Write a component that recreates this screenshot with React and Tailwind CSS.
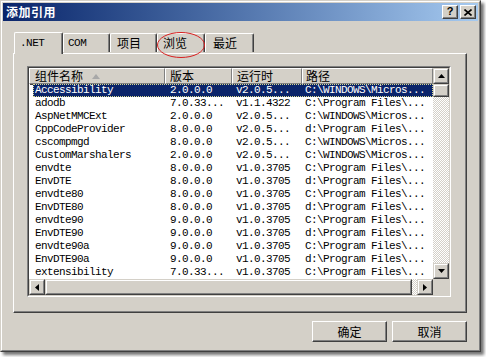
import React from "react";

const rows = [
  ["Accessibility", "2.0.0.0", "v2.0.5...", "C:\\WINDOWS\\Micros..."],
  ["adodb", "7.0.33...", "v1.1.4322", "C:\\Program Files\\..."],
  ["AspNetMMCExt", "2.0.0.0", "v2.0.5...", "C:\\WINDOWS\\Micros..."],
  ["CppCodeProvider", "8.0.0.0", "v2.0.5...", "d:\\Program Files\\..."],
  ["cscompmgd", "8.0.0.0", "v2.0.5...", "C:\\WINDOWS\\Micros..."],
  ["CustomMarshalers", "2.0.0.0", "v2.0.5...", "C:\\WINDOWS\\Micros..."],
  ["envdte", "8.0.0.0", "v1.0.3705", "C:\\Program Files\\..."],
  ["EnvDTE", "8.0.0.0", "v1.0.3705", "d:\\Program Files\\..."],
  ["envdte80", "8.0.0.0", "v1.0.3705", "C:\\Program Files\\..."],
  ["EnvDTE80", "8.0.0.0", "v1.0.3705", "d:\\Program Files\\..."],
  ["envdte90", "9.0.0.0", "v1.0.3705", "C:\\Program Files\\..."],
  ["EnvDTE90", "9.0.0.0", "v1.0.3705", "d:\\Program Files\\..."],
  ["envdte90a", "9.0.0.0", "v1.0.3705", "C:\\Program Files\\..."],
  ["EnvDTE90a", "9.0.0.0", "v1.0.3705", "d:\\Program Files\\..."],
  ["extensibility", "7.0.33...", "v1.0.3705", "C:\\Program Files\\..."],
];

function Arrow({ dir }) {
  if (dir === "up")
    return (
      <svg width="7" height="4" viewBox="0 0 7 4"><polygon points="3.5,0 7,4 0,4" fill="#000" /></svg>
    );
  if (dir === "down")
    return (
      <svg width="7" height="4" viewBox="0 0 7 4"><polygon points="0,0 7,0 3.5,4" fill="#000" /></svg>
    );
  if (dir === "left")
    return (
      <svg width="4" height="7" viewBox="0 0 4 7"><polygon points="4,0 4,7 0,3.5" fill="#000" /></svg>
    );
  return (
    <svg width="4" height="7" viewBox="0 0 4 7"><polygon points="0,0 4,3.5 0,7" fill="#000" /></svg>
  );
}

function ScrollBtn({ dir }) {
  return (
    <div className="w-[16px] h-[16px] shrink-0 bg-[#d4d0c8] border border-t-[#d4d0c8] border-l-[#d4d0c8] border-r-[#404040] border-b-[#404040]">
      <div className="w-full h-full border border-t-white border-l-white border-r-[#808080] border-b-[#808080] flex items-center justify-center">
        <Arrow dir={dir} />
      </div>
    </div>
  );
}

function Thumb({ className }) {
  return (
    <div className={"bg-[#d4d0c8] border border-t-[#d4d0c8] border-l-[#d4d0c8] border-r-[#404040] border-b-[#404040] " + className}>
      <div className="w-full h-full border border-t-white border-l-white border-r-[#808080] border-b-[#808080]" />
    </div>
  );
}

function HeaderCell({ w, pl, children }) {
  return (
    <div
      className={"h-[16px] shrink-0 flex items-center bg-[#d4d0c8] border border-t-white border-l-white border-r-[#808080] border-b-[#808080] shadow-[1px_1px_0_#404040] " + w + " " + pl}
    >
      {children}
    </div>
  );
}

function TabLabel({ w, pl, selected, children }) {
  if (selected) {
    return (
      <div
        className={"relative z-10 -mb-[1px] h-[22px] bg-[#d4d0c8] border-t border-l border-t-white border-l-white border-r border-r-[#404040] rounded-t-[2px] shadow-[inset_-1px_0_0_#808080] flex items-start pt-[3px] " + w + " " + pl}
      >
        {children}
      </div>
    );
  }
  return (
    <div
      className={"h-[19px] bg-[#d4d0c8] border-t border-l border-t-white border-l-white border-r border-r-[#404040] rounded-t-[2px] shadow-[inset_-1px_0_0_#808080] flex items-start pt-[2px] mb-[1px] " + w + " " + pl}
    >
      {children}
    </div>
  );
}

export default function App() {
  return (
    <div className="relative w-[486px] h-[357px] bg-white overflow-hidden font-['Noto_Sans_CJK_SC',sans-serif] text-[12px] text-black">
      <div className="w-[481px] h-[352px] bg-[#d4d0c8] border border-t-[#d4d0c8] border-l-[#d4d0c8] border-r-[#404040] border-b-[#404040] shadow-[3px_3px_3px_rgba(0,0,0,0.55)]">
        <div className="w-full h-full border border-t-white border-l-white border-r-[#808080] border-b-[#808080] p-[1px] flex flex-col">
          {/* Title bar */}
          <div className="h-[18px] shrink-0 bg-gradient-to-r from-[#0a246a] to-[#a6caf0] flex items-center pl-[3px] pr-[2px]">
            <span className="text-white font-bold text-[12px] leading-[18px] tracking-[0.5px]">添加引用</span>
            <div className="ml-auto flex gap-[2px]">
              <div className="w-[16px] h-[14px] bg-[#d4d0c8] border border-t-white border-l-white border-r-[#404040] border-b-[#404040] shadow-[inset_-1px_-1px_0_#808080] flex items-center justify-center">
                <span className="font-['Liberation_Sans',sans-serif] font-bold text-[11px] leading-[11px] -mt-[1px]">?</span>
              </div>
              <div className="w-[16px] h-[14px] bg-[#d4d0c8] border border-t-white border-l-white border-r-[#404040] border-b-[#404040] shadow-[inset_-1px_-1px_0_#808080] flex items-center justify-center">
                <svg width="8" height="7" viewBox="0 0 8 7">
                  <path d="M0.5 0.5 L7.5 6.5 M7.5 0.5 L0.5 6.5" stroke="#000" strokeWidth="1.6" />
                </svg>
              </div>
            </div>
          </div>

          {/* Content */}
          <div className="pl-[10px] pt-[10px] flex flex-col">
            {/* Tabs */}
            <div className="flex items-end h-[22px] pl-[1px] font-['Liberation_Mono','Noto_Sans_CJK_SC',monospace]">
              <TabLabel w="w-[49px]" pl="pl-[5px]" selected>
                <span className="text-[11px] leading-[14px] tracking-[-0.5px]">.NET</span>
              </TabLabel>
              <TabLabel w="w-[47px]" pl="pl-[4px]">
                <span className="text-[11px] leading-[14px] tracking-[-0.5px]">COM</span>
              </TabLabel>
              <TabLabel w="w-[47px]" pl="pl-[6px]">
                <span className="font-['Noto_Sans_CJK_SC',sans-serif] text-[12px] leading-[14px]">项目</span>
              </TabLabel>
              <TabLabel w="w-[48px]" pl="pl-[5px]">
                <span className="font-['Noto_Sans_CJK_SC',sans-serif] text-[12px] leading-[14px]">浏览</span>
              </TabLabel>
              <TabLabel w="w-[49px]" pl="pl-[7px]">
                <span className="font-['Noto_Sans_CJK_SC',sans-serif] text-[12px] leading-[14px]">最近</span>
              </TabLabel>
            </div>

            {/* Tab panel */}
            <div className="w-[454px] h-[260px] border border-t-white border-l-white border-r-[#404040] border-b-[#404040] shadow-[inset_-1px_-1px_0_#808080] pl-[13px] pt-[12px]">
              {/* List view */}
              <div className="w-[424px] h-[231px] border border-t-[#808080] border-l-[#808080] border-r-white border-b-white">
                <div className="w-full h-full border border-t-[#404040] border-l-[#404040] border-r-[#d4d0c8] border-b-[#d4d0c8] grid grid-cols-[404px_16px] grid-rows-[211px_16px] bg-white">
                  {/* List area */}
                  <div className="flex flex-col overflow-hidden">
                    <div className="flex h-[16px] shrink-0">
                      <HeaderCell w="w-[136px]" pl="pl-[5px]">
                        <span className="leading-[14px]">组件名称</span>
                        <svg className="ml-[9px]" width="8" height="5" viewBox="0 0 8 5">
                          <polygon points="4,0 8,5 0,5" fill="#a8a8a8" />
                        </svg>
                      </HeaderCell>
                      <HeaderCell w="w-[67px]" pl="pl-[4px]">
                        <span className="leading-[14px]">版本</span>
                      </HeaderCell>
                      <HeaderCell w="w-[70px]" pl="pl-[4px]">
                        <span className="leading-[14px]">运行时</span>
                      </HeaderCell>
                      <HeaderCell w="w-[131px]" pl="pl-[3px]">
                        <span className="leading-[14px]">路径</span>
                      </HeaderCell>
                    </div>
                    <div className="flex flex-col font-['Liberation_Mono',monospace] text-[11px] tracking-[-0.6px]">
                      {rows.map((r, i) => {
                        const sel = i === 0;
                        return (
                          <div
                            key={i}
                            className={
                              sel
                                ? "ml-[4px] h-[13px] flex items-center whitespace-nowrap bg-[#0a246a] text-white outline-1 outline-dotted outline-[#d8d890] -outline-offset-1"
                                : "ml-[4px] h-[13px] flex items-center whitespace-nowrap text-black"
                            }
                          >
                            <div className="w-[132px] shrink-0 pl-[2px] leading-[13px]">{r[0]}</div>
                            <div className="w-[67px] shrink-0 pl-[5px] leading-[13px]">{r[1]}</div>
                            <div className="w-[69px] shrink-0 pl-[4px] leading-[13px]">{r[2]}</div>
                            <div className="flex-1 pl-[4px] leading-[13px]">{r[3]}</div>
                          </div>
                        );
                      })}
                    </div>
                  </div>

                  {/* Vertical scrollbar */}
                  <div className="flex flex-col bg-[repeating-conic-gradient(#ffffff_0%_25%,#d4d0c8_0%_50%)] bg-[length:2px_2px]">
                    <ScrollBtn dir="up" />
                    <Thumb className="w-[16px] h-[13px]" />
                    <div className="flex-1" />
                    <ScrollBtn dir="down" />
                  </div>

                  {/* Horizontal scrollbar */}
                  <div className="flex bg-[repeating-conic-gradient(#ffffff_0%_25%,#d4d0c8_0%_50%)] bg-[length:2px_2px]">
                    <ScrollBtn dir="left" />
                    <Thumb className="w-[367px] h-[16px]" />
                    <div className="flex-1" />
                    <ScrollBtn dir="right" />
                  </div>

                  {/* Corner */}
                  <div className="bg-[#d4d0c8]" />
                </div>
              </div>
            </div>

            {/* Buttons */}
            <div className="w-[454px] flex justify-end gap-[5px] mt-[8px]">
              <div className="w-[75px] h-[21px] bg-[#d4d0c8] border border-t-white border-l-white border-r-[#404040] border-b-[#404040] shadow-[inset_-1px_-1px_0_#808080] flex items-center justify-center">
                <span className="leading-[14px]">确定</span>
              </div>
              <div className="w-[75px] h-[21px] bg-[#d4d0c8] border border-t-white border-l-white border-r-[#404040] border-b-[#404040] shadow-[inset_-1px_-1px_0_#808080] flex items-center justify-center">
                <span className="leading-[14px]">取消</span>
              </div>
            </div>
          </div>
        </div>
      </div>

      {/* Red annotation ellipse */}
      <svg className="absolute left-[156px] top-[31px] pointer-events-none" width="50" height="28" viewBox="0 0 50 28">
        <ellipse cx="25" cy="14" rx="23.5" ry="12.5" fill="none" stroke="#d82020" strokeWidth="1" />
      </svg>
    </div>
  );
}
